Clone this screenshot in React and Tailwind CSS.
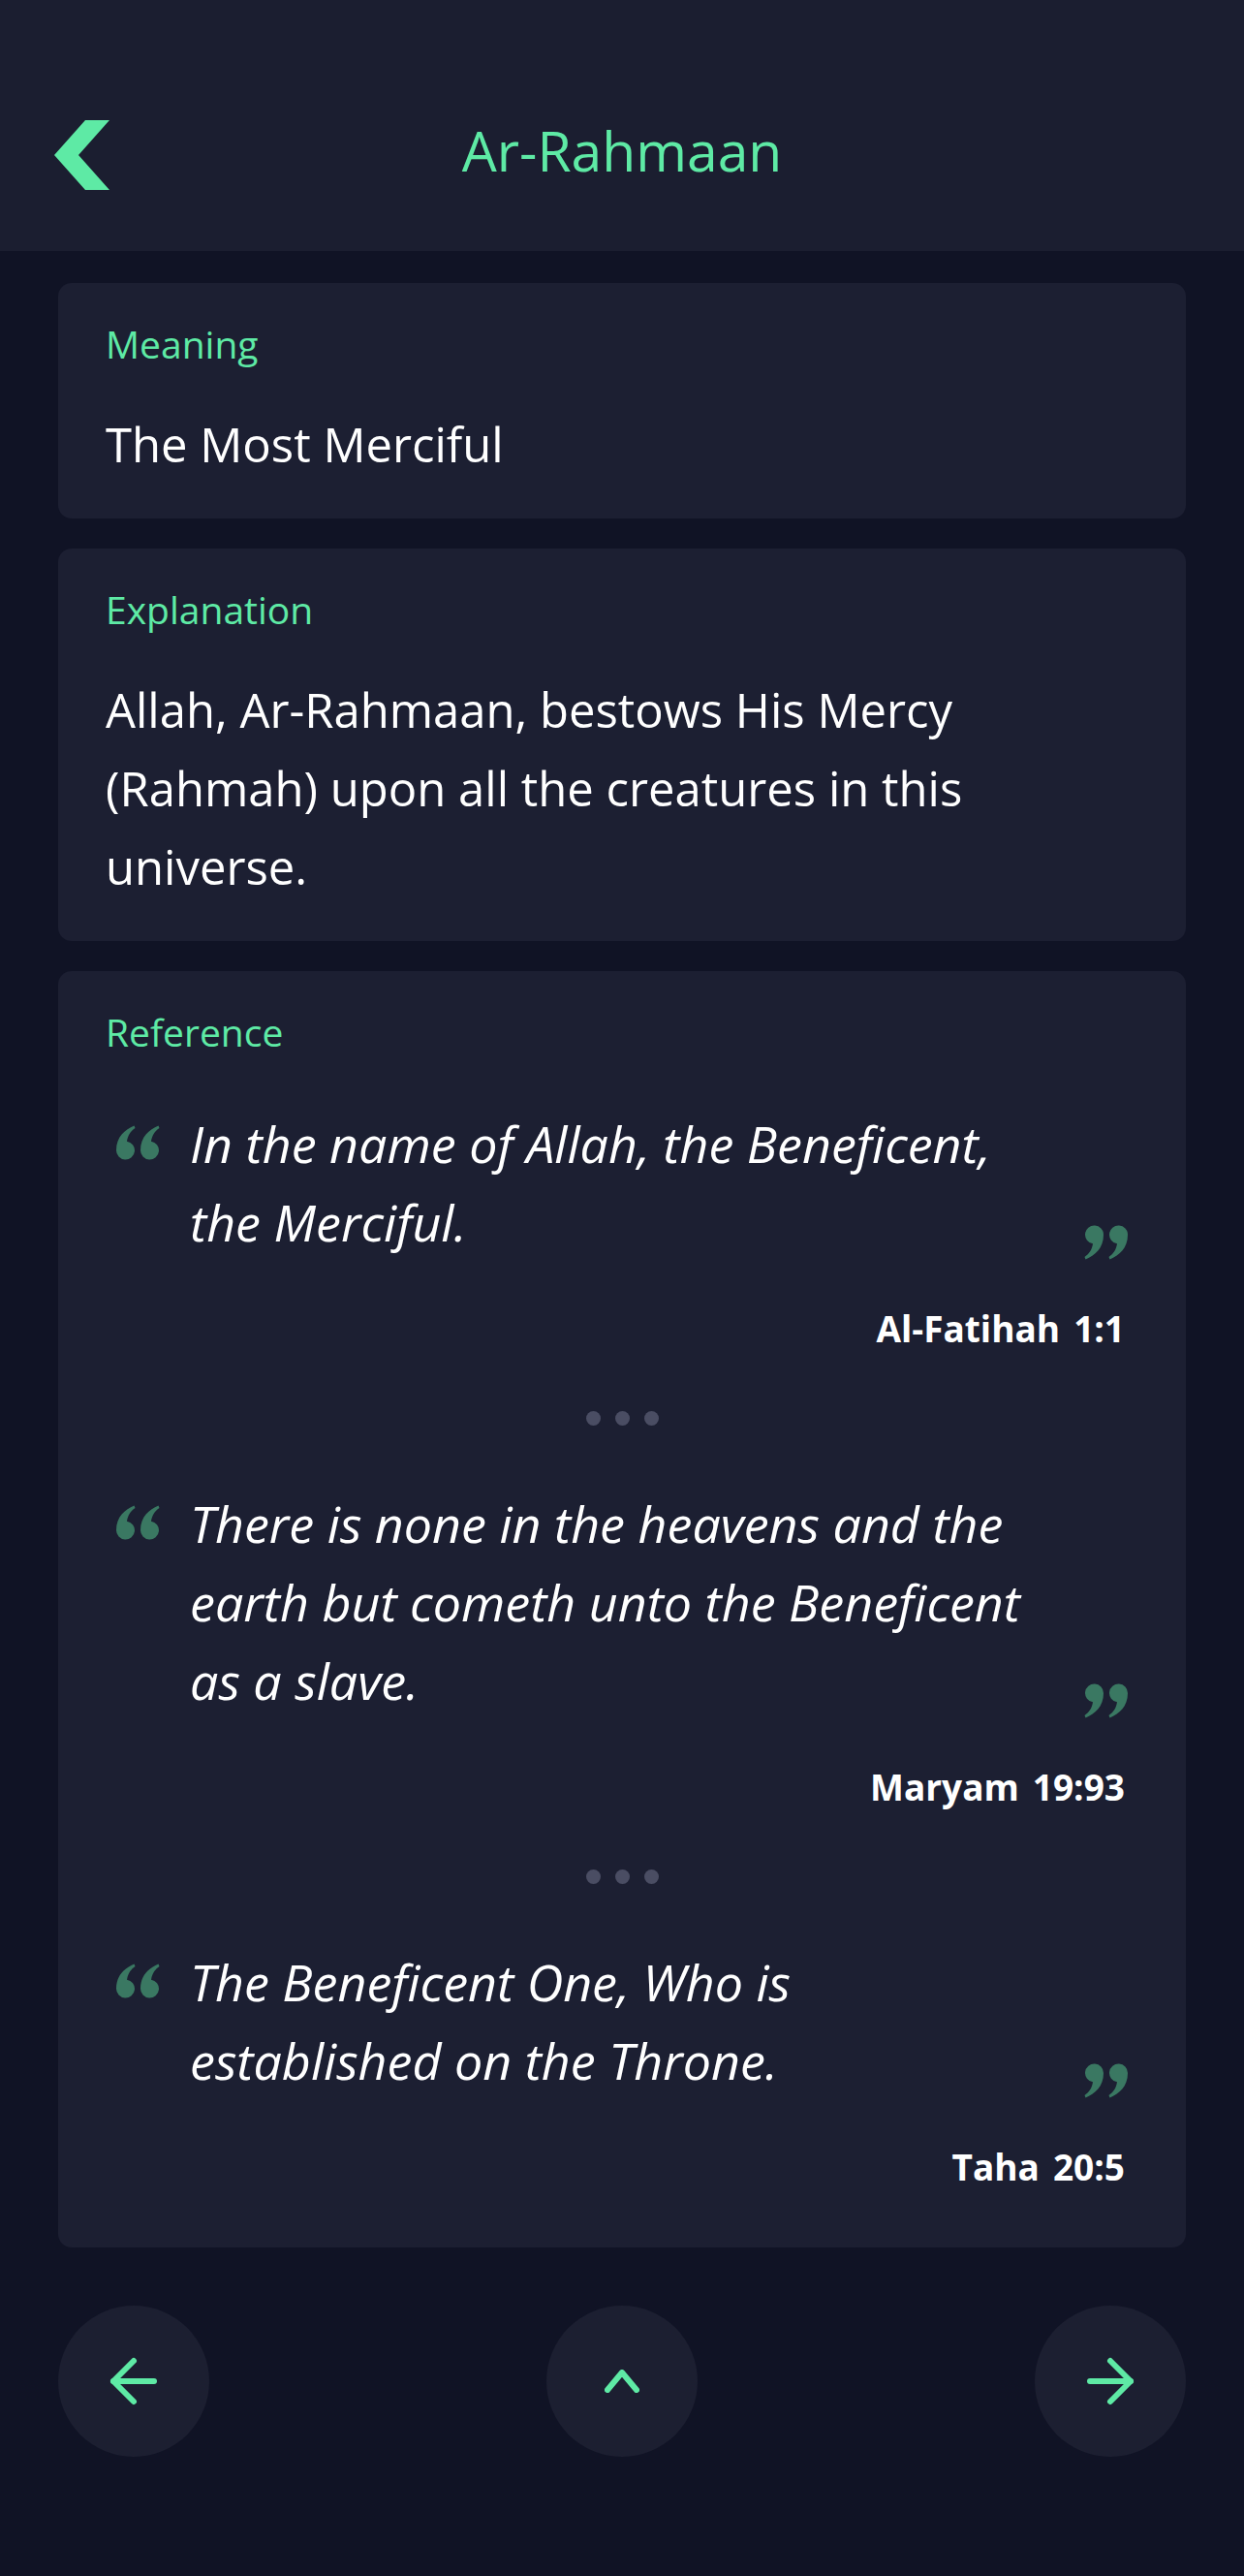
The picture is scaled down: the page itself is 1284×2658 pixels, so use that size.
import { ArrowLeft, ArrowRight } from 'lucide-react';

const quotes = [
    { text: 'In the name of Allah, the Beneficent, the Merciful.', surah: 'Al-Fatihah', ayah: '1:1' },
    { text: 'There is none in the heavens and the earth but cometh unto the Beneficent as a slave.', surah: 'Maryam', ayah: '19:93' },
    { text: 'The Beneficent One, Who is established on the Throne.', surah: 'Taha', ayah: '20:5' },
];

// one "6" shaped comma, reused for both glyphs
const COMMA = 'M19.5 1.5 C10 5.5 1 13 1 27 A9.5 9.5 0 1 0 12 17.7 C12.8 12 15.5 7.5 20.5 4 Z';

function QuoteMark({ close = false }) {
    return (
        <svg width="46" height="37" viewBox="0 0 46 37" className={`shrink-0 ${close ? 'rotate-180' : ''}`}>
            <path d={COMMA} fill="#3a7862" />
            <path d={COMMA} fill="#3a7862" transform="translate(25 0)" />
        </svg>
    );
}

function Card({ label, children }) {
    return (
        <div className="bg-[#1c1f32] rounded-[14px] px-[49px] pt-[39px] pb-[36px]">
            <div className="text-[39px] leading-[47px] text-[#5eeaa5]">{label}</div>
            {children}
        </div>
    );
}

function Dots() {
    return (
        <div className="flex justify-center gap-[15px] mt-[61px] mb-[60px]">
            <span className="w-[15px] h-[15px] rounded-full bg-[#4a4d63]" />
            <span className="w-[15px] h-[15px] rounded-full bg-[#4a4d63]" />
            <span className="w-[15px] h-[15px] rounded-full bg-[#4a4d63]" />
        </div>
    );
}

export default function App() {
    return (
        <div className="min-h-screen bg-[#101325] font-['Open_Sans',sans-serif] text-white">
            {/* Top bar */}
            <header className="bg-[#1b1e30] h-[259px] pt-[100px] px-[56px]">
                <div className="grid grid-cols-[1fr_auto_1fr] items-center h-[120px]">
                    <svg width="57" height="72" viewBox="0 0 57 72">
                        <polygon points="57,0 32,0 0,36 32,72 57,72 25,36" fill="#5eeaa5" />
                    </svg>
                    <h1 className="text-[57px] leading-none text-[#5eeaa5] mb-[10px]">Ar-Rahmaan</h1>
                    <div />
                </div>
            </header>

            <main className="px-[60px] pt-[33px] flex flex-col gap-[31px]">
                <Card label="Meaning">
                    <p className="mt-[40px] text-[49px] leading-[81px]">The Most Merciful</p>
                </Card>

                <Card label="Explanation">
                    <p className="mt-[40px] text-[49px] leading-[81px]">
                        Allah, Ar-Rahmaan, bestows His Mercy (Rahmah) upon all the creatures in this universe.
                    </p>
                </Card>

                <Card label="Reference">
                    <div className="mt-[51px] px-[10px] pb-[23px]">
                        {quotes.map((q, i) => (
                            <div key={q.surah}>
                                <div className="flex">
                                    <div className="mt-[21px]">
                                        <QuoteMark />
                                    </div>
                                    <p className="flex-1 ml-[31px] mr-[48px] text-[52px] leading-[81px] italic">{q.text}</p>
                                    <div className="self-end">
                                        <QuoteMark close />
                                    </div>
                                </div>
                                <div className="mt-[46px] flex justify-end gap-[14px] pr-[4px] text-[37px] leading-[48px] font-bold">
                                    <span>{q.surah}</span>
                                    <span>{q.ayah}</span>
                                </div>
                                {i < quotes.length - 1 && <Dots />}
                            </div>
                        ))}
                    </div>
                </Card>
            </main>

            {/* Bottom navigation */}
            <nav className="px-[60px] mt-[60px] pb-[122px] flex justify-between">
                <button className="w-[156px] h-[156px] rounded-full bg-[#1c1f31] flex items-center justify-center text-[#5eeaa5]">
                    <ArrowLeft size={72} strokeWidth={2} />
                </button>
                <button className="w-[156px] h-[156px] rounded-full bg-[#1c1f31] flex items-center justify-center">
                    <svg width="36" height="24" viewBox="0 0 36 24" fill="none" stroke="#5eeaa5" strokeWidth="6" strokeLinecap="round" strokeLinejoin="round">
                        <polyline points="3,21 18,3 33,21" />
                    </svg>
                </button>
                <button className="w-[156px] h-[156px] rounded-full bg-[#1c1f31] flex items-center justify-center text-[#5eeaa5]">
                    <ArrowRight size={72} strokeWidth={2} />
                </button>
            </nav>
        </div>
    );
}
